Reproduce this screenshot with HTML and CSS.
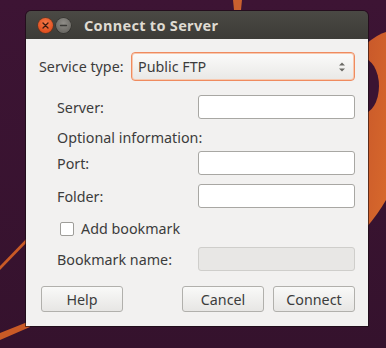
FILE: index.html
```html
<!DOCTYPE html>
<html>
<head>
<meta charset="utf-8">
<link rel="stylesheet" href="styles.css">
</head>
<body>
<svg class="desktop" width="386" height="348" viewBox="0 0 386 348" xmlns="http://www.w3.org/2000/svg">
  <defs>
    <linearGradient id="bg" x1="0" y1="0" x2="0" y2="1">
      <stop offset="0" stop-color="#3d1434"/>
      <stop offset="1" stop-color="#35122d"/>
    </linearGradient>
    <linearGradient id="or" x1="0" y1="0" x2="1" y2="1">
      <stop offset="0" stop-color="#c8582a"/>
      <stop offset="1" stop-color="#d8692c"/>
    </linearGradient>
  </defs>
  <rect width="386" height="348" fill="url(#bg)"/>
  <path d="M233 0 L242 0 L241 10 L234 10 Z" fill="#c9602e"/>
  <path d="M366 44 Q378 34 386 32 L386 200 Q378 214 366 228 Z" fill="url(#or)"/>
  <ellipse cx="362" cy="86" rx="17" ry="28" fill="#3b1432"/>
  <path d="M0 266 L30 235 L30 239 L0 270 Z" fill="#c95a26"/>
  <path d="M0 333 L30 321 L30 327 L0 340 Z" fill="#c95a26"/>
</svg>
<div class="window">
  <div class="titlebar">
    <div class="wbtn close"><svg width="15" height="15" viewBox="0 0 15 15"><path d="M5 5 L10 10 M10 5 L5 10" stroke="#3a1a10" stroke-width="1.3" stroke-linecap="round"/></svg></div>
    <div class="wbtn mini"><svg width="15" height="15" viewBox="0 0 15 15"><path d="M4.5 7.5 L10.5 7.5" stroke="#3b3a37" stroke-width="1.4" stroke-linecap="round"/></svg></div>
    <div class="title">Connect to Server</div>
  </div>
  <div class="content">
    <div class="row-type">
      <span class="label">Service type:</span>
      <div class="combo">
        <span>Public FTP</span>
        <svg width="8" height="12" viewBox="0 0 8 12"><path d="M1 4.5 L4 1.5 L7 4.5 Z M1 7.5 L4 10.5 L7 7.5 Z" fill="#6b6a66"/></svg>
      </div>
    </div>
    <div class="form">
      <div class="row r-server"><span class="label">Server:</span><div class="entry"></div></div>
      <div class="row r-opt"><span class="label">Optional information:</span></div>
      <div class="row r-port"><span class="label">Port:</span><div class="entry"></div></div>
      <div class="row r-folder"><span class="label">Folder:</span><div class="entry"></div></div>
      <div class="row r-check"><span class="check"></span><span class="label">Add bookmark</span></div>
      <div class="row r-bm"><span class="label">Bookmark name:</span><div class="entry disabled"></div></div>
    </div>
    <div class="buttons">
      <div class="btn">Help</div>
      <div class="spacer"></div>
      <div class="btn">Cancel</div>
      <div class="btn">Connect</div>
    </div>
  </div>
</div>
</body>
</html>
```
FILE: styles.css
```css
html, body {
  margin: 0;
  padding: 0;
}
body {
  width: 386px;
  height: 348px;
  overflow: hidden;
  position: relative;
  font-family: "Noto Sans", "DejaVu Sans", sans-serif;
  font-size: 14.3px;
  color: #3c3c3c;
}
.desktop {
  position: absolute;
  left: 0;
  top: 0;
}
.window {
  position: relative;
  margin-left: 26px;
  margin-top: 11px;
  width: 342px;
  display: flex;
  flex-direction: column;
  box-shadow: 0 0 0 1px rgba(20, 10, 15, 0.6);
  border-radius: 5px 5px 0 0;
}
.titlebar {
  height: 28px;
  background: linear-gradient(#4a4944, #3c3b37);
  border-radius: 5px 5px 0 0;
  display: flex;
  align-items: center;
  padding-left: 12px;
  box-sizing: border-box;
}
.wbtn {
  width: 15px;
  height: 15px;
  border-radius: 50%;
  display: flex;
  margin-right: 3px;
}
.close {
  background: radial-gradient(circle at 50% 35%, #f47a4a, #e2501f 70%);
  box-shadow: 0 0 0 0.5px #7a2d10;
}
.mini {
  background: radial-gradient(circle at 50% 35%, #8f8d88, #6d6b66 70%);
  box-shadow: 0 0 0 0.5px #2d2c29;
}
.title {
  margin-left: 10px;
  font-weight: bold;
  font-size: 14.5px;
  color: #dfdbd2;
  letter-spacing: 0.3px;
}
.content {
  background: #f2f1f0;
  padding: 13px 13px 14px 13px;
  display: flex;
  flex-direction: column;
}
.row-type {
  display: flex;
  align-items: center;
  height: 29px;
}
.row-type .label {
  width: 92px;
}
.combo {
  flex: 1;
  height: 29px;
  box-sizing: border-box;
  border: 1px solid #ef8b5f;
  box-shadow: inset 0 0 0 1px #f8c8ae;
  border-radius: 4px;
  background: linear-gradient(#fbfbfa, #e9e8e6);
  display: flex;
  align-items: center;
  justify-content: space-between;
  padding: 0 8px 0 6px;
  color: #3c3c3c;
}
.form {
  display: flex;
  flex-direction: column;
  padding-left: 18px;
  margin-top: 14px;
}
.row {
  display: flex;
  align-items: center;
  justify-content: space-between;
  height: 24px;
}
.r-opt { margin-top: 6px; }
.r-port { margin-top: 2px; }
.r-folder { margin-top: 9px; }
.r-check {
  margin-top: 7px;
  height: 27px;
  justify-content: flex-start;
}
.r-bm { margin-top: 5px; }
.entry {
  width: 157px;
  height: 24px;
  box-sizing: border-box;
  border: 1px solid #a8a7a3;
  border-radius: 3px;
  background: #ffffff;
}
.entry.disabled {
  background: #e8e7e5;
  border-color: #cfcecb;
}
.check {
  width: 14px;
  height: 14px;
  box-sizing: border-box;
  border: 1px solid #9e9d99;
  border-radius: 2px;
  background: #ffffff;
  margin-left: 3px;
  margin-right: 7px;
}
.buttons {
  display: flex;
  margin-top: 15px;
  padding-left: 2px;
  gap: 9px;
}
.spacer { flex: 1; }
.btn {
  width: 82px;
  height: 26px;
  box-sizing: border-box;
  border: 1px solid #b1b0ac;
  border-radius: 3px;
  background: linear-gradient(#f9f9f8, #e7e6e4);
  display: flex;
  align-items: center;
  justify-content: center;
  color: #3c3c3c;
}
```
